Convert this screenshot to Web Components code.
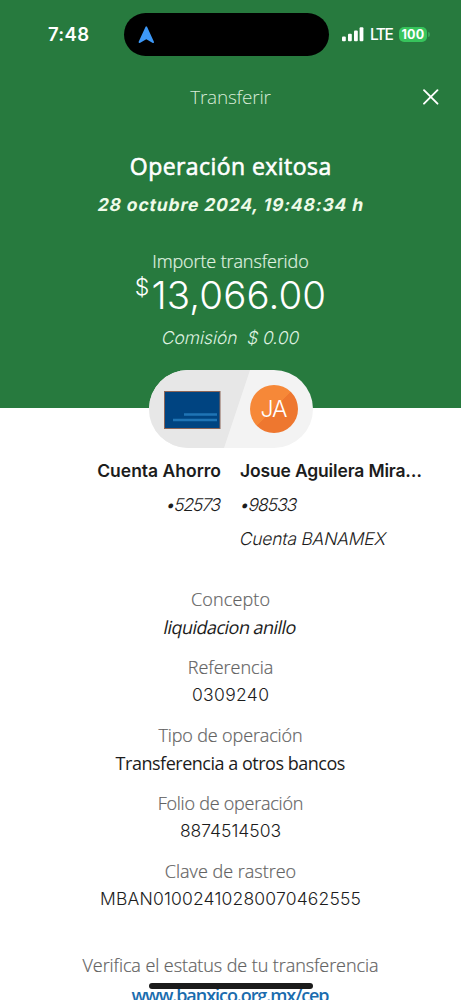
<!DOCTYPE html>
<html lang="es">
<head>
<meta charset="utf-8">
<meta name="viewport" content="width=device-width, initial-scale=1">
<title>Transferir</title>
<style>
html,body{margin:0;padding:0;height:1000px;overflow:hidden;background:#fff}
body{font-family:"Open Sans","Noto Sans",sans-serif}
</style>
</head>
<body>
<transfer-receipt></transfer-receipt>
<script>
/* One line of text, tracked so that its advance equals the "span" attribute. */
class TextLine extends HTMLElement{
  connectedCallback(){
    const a=n=>this.getAttribute(n);
    const root=this.attachShadow({mode:'open'});
    root.innerHTML=`<style>
      :host{display:block;white-space:pre;font-size:${a('size')||18}px;font-weight:${a('weight')||400};
        line-height:${a('line')||28}px;height:${a('line')||28}px;color:${a('color')||'inherit'};
        ${a('inter')===null?'':'font-family:Inter,sans-serif;'}-webkit-text-stroke:${a('stroke')||0}px currentColor}
      span{display:inline-block;${a('slant')===null?'':'transform:skewX(-12deg)'}}
    </style><span><slot></slot></span>`;
    const s=root.querySelector('span');
    const want=parseFloat(a('span'));
    if(want){
      const text=root.querySelector('slot').assignedNodes({flatten:true}).map(n=>n.textContent).join('');
      const gap=(want-s.offsetWidth)/Math.max(1,text.length-1);
      s.style.letterSpacing=gap+'px';
      s.style.marginRight=-gap+'px';
    }
  }
}
customElements.define('text-line',TextLine);

class StatusBar extends HTMLElement{
  connectedCallback(){
    this.attachShadow({mode:'open'}).innerHTML=`<style>
      :host{display:grid;grid-template-columns:124px 205px 1fr;height:43px;padding-top:13px;color:#fff;font-family:Inter,sans-serif}
      .time{padding:8px 0 0 48px}
      .island{background:#000;border-radius:22px;display:flex;align-items:center;padding-left:14px}
      .right{display:flex;align-items:center;padding-left:13px}
      .lte{margin:1px 0 0 6px}
      .bat{margin-left:5px;width:28px;height:15px;border-radius:5px;background:#37c45c;display:flex;justify-content:center}
      .nub{width:2px;height:5px;margin-left:1px;border-radius:0 2px 2px 0;background:#37a455}
    </style>
    <div class="time"><text-line size="18.5" weight="600" line="27" span="41">7:48</text-line></div>
    <div class="island"><svg width="17" height="18" viewBox="0 0 17 18"><path d="M8.3 1.2 15.2 16.2 8.3 12.2 1.4 16.2Z" fill="#3d98f7" stroke="#3d98f7" stroke-width="1.6" stroke-linejoin="round"/></svg></div>
    <div class="right"><svg width="22" height="15" viewBox="0 0 22 15" fill="#fff"><rect y="9.5" width="3.8" height="4.8" rx="1"/><rect x="6" y="6.8" width="3.8" height="7.5" rx="1"/><rect x="12" y="3.6" width="3.8" height="10.7" rx="1"/><rect x="17.6" y=".3" width="3.8" height="14" rx="1"/></svg>
      <text-line class="lte" size="15.5" weight="500" line="20" span="24">LTE</text-line>
      <div class="bat"><text-line size="12.5" weight="700" line="15" span="22.5">100</text-line></div><div class="nub"></div></div>`;
  }
}
customElements.define('status-bar',StatusBar);

class TitleBar extends HTMLElement{
  connectedCallback(){
    this.attachShadow({mode:'open'}).innerHTML=`<style>
      :host{display:grid;grid-template-columns:60px 1fr 60px;align-items:center;justify-items:center;height:28px;margin-top:27px;color:#d8ecd9}
    </style><i></i><text-line size="19" weight="300" span="81"><slot></slot></text-line>
    <svg width="18" height="18" viewBox="0 0 18 18" stroke="#fff" stroke-width="1.9" stroke-linecap="round"><path d="M2 2.2 15.5 15.7M15.5 2.2 2 15.7"/></svg>`;
  }
}
customElements.define('title-bar',TitleBar);

class AccountPill extends HTMLElement{
  connectedCallback(){
    this.attachShadow({mode:'open'}).innerHTML=`<style>
      :host{display:flex;align-items:center;box-sizing:border-box;width:164px;height:78px;border-radius:39px;padding-left:15px;
        margin:-38px 0 0 149px;position:relative;background:#f3f3f3;overflow:hidden}
      .bg{position:absolute;inset:0}
      .card{position:relative;margin-top:2px}
      .who{position:relative;margin-left:29px;width:48px;height:48px;border-radius:50%;display:flex;align-items:center;justify-content:center;
        background:linear-gradient(135deg,#f68838 50%,#ee772f 50%);color:#fff}
    </style>
    <svg class="bg" width="164" height="78"><path d="M0 0H101L75 78H0Z" fill="#e7e7e7"/></svg>
    <svg class="card" width="57" height="38" viewBox="0 0 57 38"><rect x=".5" y=".5" width="55.5" height="37" fill="#004481" stroke="#8c6557"/><path d="M20 23.5H53M9 29H53" stroke="#1f74b5" stroke-width="2.6"/></svg>
    <div class="who"><text-line inter size="23" weight="300" line="46" span="27"><slot></slot></text-line></div>`;
  }
}
customElements.define('account-pill',AccountPill);

class DetailItem extends HTMLElement{
  connectedCallback(){
    const a=n=>this.getAttribute(n);
    const flag=n=>a(n)===null?'':n;
    this.attachShadow({mode:'open'}).innerHTML=`<style>
      :host{display:flex;flex-direction:column;align-items:center}
    </style><text-line weight="300" color="#626262" stroke=".2" span="${a('label-span')}">${a('label')}</text-line>
    <text-line color="#1c1c1c" ${flag('slant')} ${flag('inter')} weight="${a('inter')===null?400:350}" size="${a('size')||18}" span="${a('value-span')}">${this.textContent}</text-line>`;
  }
}
customElements.define('detail-item',DetailItem);

class TransferReceipt extends HTMLElement{
  connectedCallback(){
    this.attachShadow({mode:'open'}).innerHTML=`<style>
      :host{display:block;position:relative;width:461px;height:1000px;overflow:hidden;background:#fff;color:#1c1c1c}
      header{height:408px;background:#277a3e;color:#fff}
      .sum{display:flex;flex-direction:column;align-items:center;padding-top:39px}
      .date{margin-top:9px}.imp{margin-top:28px}
      .amount{display:flex;align-items:flex-start;height:48px;margin-top:-4px}
      .sign{margin:2px 2px 0 0}
      .fee{margin-top:5px}
      .accounts{display:grid;grid-template-columns:221px 1fr;column-gap:19px;margin-top:9px}
      .from{display:flex;flex-direction:column;align-items:flex-end}
      .accounts text-line+text-line{margin-top:6px}
      .details{display:flex;flex-direction:column;gap:12px;margin-top:32px}
      footer{display:flex;flex-direction:column;align-items:center;margin-top:38px}
      .link{margin-top:2px}
      .home{position:absolute;left:149px;top:983px;width:164px;height:6px;border-radius:3px;background:#1b1b1b}
    </style>
    <header>
      <status-bar></status-bar>
      <title-bar>Transferir</title-bar>
      <div class="sum">
        <text-line size="23" stroke=".6" span="201" line="32">Operación exitosa</text-line>
        <text-line class="date" inter size="17.5" weight="700" slant span="265" color="#effbe9">28 octubre 2024, 19:48:34 h</text-line>
        <text-line class="imp" weight="300" stroke=".2" span="157" color="#e0f3e2">Importe transferido</text-line>
        <div class="amount"><text-line class="sign" inter size="23" weight="300" line="28" span="14">$</text-line><text-line inter size="38.5" weight="300" line="48" span="175">13,066.00</text-line></div>
        <text-line class="fee" inter size="17.5" weight="300" slant span="138" color="#dff2e0">Comisión  $ 0.00</text-line>
      </div>
    </header>
    <account-pill>JA</account-pill>
    <section class="accounts">
      <div class="from"><text-line inter size="17.5" weight="600" span="124">Cuenta Ahorro</text-line><text-line inter size="17.5" weight="300" slant span="55">•52573</text-line></div>
      <div><text-line inter size="17.5" weight="600" span="182">Josue Aguilera Mira…</text-line><text-line inter size="17.5" weight="300" slant span="58">•98533</text-line><text-line inter size="17.5" weight="300" slant span="146">Cuenta BANAMEX</text-line></div>
    </section>
    <section class="details">
      <detail-item label="Concepto" label-span="79" value-span="133" slant>liquidacion anillo</detail-item>
      <detail-item label="Referencia" label-span="86" inter size="17.5" value-span="77">0309240</detail-item>
      <detail-item label="Tipo de operación" label-span="144" value-span="230">Transferencia a otros bancos</detail-item>
      <detail-item label="Folio de operación" label-span="146" inter size="17.5" value-span="101">8874514503</detail-item>
      <detail-item label="Clave de rastreo" label-span="131" inter size="17.5" value-span="261">MBAN01002410280070462555</detail-item>
    </section>
    <footer>
      <text-line weight="300" color="#626262" stroke=".2" span="296">Verifica el estatus de tu transferencia</text-line>
      <text-line class="link" weight="600" color="#1a6cae" span="198">www.banxico.org.mx/cep</text-line>
    </footer>
    <div class="home"></div>`;
  }
}
customElements.define('transfer-receipt',TransferReceipt);
</script>
</body>
</html>
